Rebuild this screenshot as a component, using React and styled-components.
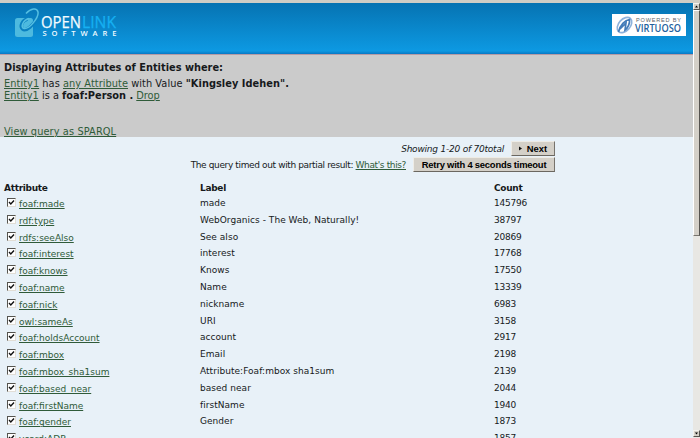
import React from "react";
import styled, { createGlobalStyle } from "styled-components";

const GlobalStyle = createGlobalStyle`
  * { box-sizing: border-box; }
  body {
    margin: 0;
    overflow: hidden;
    color: #16191b;
    font-family: "DejaVu Sans", Verdana, sans-serif;
    font-size: 9px;
  }
`;

const Window = styled.div`
  display: grid;
  grid-template-columns: 1fr 7px;
  width: 700px;
  height: 438px;
  overflow: hidden;
  background: #e8f1f8;
`;

const Page = styled.div`
  display: flex;
  flex-direction: column;
  min-width: 0;
  height: 438px;
  overflow: hidden;
`;

const Header = styled.header`
  display: flex;
  justify-content: space-between;
  flex: none;
  height: 55px;
  padding: 5px 7px 0 14px;
  border-top: 3px solid #d0cdc5;
  border-bottom: 1px solid #b59ba5;
  background: linear-gradient(#0673b2, #0d99e2 94%, #0878c4);
`;

const VirtuosoBadge = styled.div`
  width: 74px;
  height: 22px;
  margin-top: 6px;
  background: #fff;
`;

const QueryPanel = styled.section`
  display: flex;
  flex-direction: column;
  flex: none;
  height: 82px;
  padding: 5px 4px 0;
  background: #cbcbcb;
  font-size: 9.8px;
  line-height: 12px;
`;

const Title = styled.h1`
  margin: 0 0 3px;
  font-size: 9.8px;
  line-height: 15px;
  white-space: nowrap;
`;

const QueryLine = styled.div`
  white-space: nowrap;
  letter-spacing: ${(p) => p.$spacing || 0}px;
`;

const ViewQuery = styled.div`
  margin-top: 24px;
  letter-spacing: 0.1px;
`;

const Link = styled.a`
  color: #2f5b39;
  text-decoration: underline;
  text-underline-offset: 1px;
  text-decoration-thickness: 1px;
`;

const Pager = styled.div`
  display: flex;
  align-items: center;
  justify-content: flex-end;
  flex: none;
  width: 555px;
  height: 15px;
  margin-top: ${(p) => p.$top}px;
  white-space: nowrap;
`;

const Status = styled.span`
  margin-right: ${(p) => p.$gap}px;
  font-style: ${(p) => (p.$italic ? "italic" : "normal")};
  letter-spacing: ${(p) => p.$spacing || 0}px;
`;

const Button = styled.button`
  display: flex;
  align-items: center;
  justify-content: center;
  flex: none;
  width: ${(p) => p.$width}px;
  height: 15px;
  padding: 0;
  border: 1px solid;
  border-color: #eeece6 #77736c #6b6760 #eeece6;
  background: #d4d0c8;
  color: #000;
  font: bold 9.4px "Liberation Sans", Arial, sans-serif;
  letter-spacing: ${(p) => p.$spacing || 0}px;
  white-space: nowrap;
`;

const Arrow = styled.svg`
  width: 4px;
  height: 5px;
  margin-right: 4px;
`;

const Table = styled.div`
  display: grid;
  grid-template-columns: 196px 294px 60px;
  grid-template-rows: 14px;
  grid-auto-rows: 16.8px;
  margin: 10px 0 0 4px;
  white-space: nowrap;
`;

const HeadCell = styled.div`
  font-size: 9px;
  font-weight: bold;
  line-height: 13px;
  letter-spacing: -0.3px;
`;

const AttributeCell = styled.div`
  display: flex;
  gap: 3px;
  padding: 2px 0 0 3px;
  line-height: 12px;
`;

const Cell = styled.div`
  line-height: 14px;
  letter-spacing: ${(p) => p.$spacing || 0}px;
`;

const Box = styled.span`
  flex: none;
  display: flex;
  width: 9px;
  height: 9px;
  border: 1px solid;
  border-color: #55544f #e1ddd5 #e1ddd5 #55544f;
  background: #fff;
`;

const Scrollbar = styled.div`
  display: flex;
  flex-direction: column;
  height: 438px;
  background: #e8e7e3;
  border-top: 3px solid #d0cdc5;
`;

const ScrollButton = styled.div`
  display: flex;
  align-items: center;
  justify-content: center;
  flex: none;
  height: 7px;
  margin-top: ${(p) => p.$top}px;
  border: 1px solid;
  border-color: #f4f2ed #55534f #55534f #f4f2ed;
  background: #d4d0c8;
`;

const Thumb = styled.div`
  flex: none;
  height: 226px;
  border: 1px solid;
  border-color: #fff #55534f #77746e #fff;
  background: #d4d0c8;
`;

const rows = [
  ["foaf:made", "made", "145796"],
  ["rdf:type", "WebOrganics - The Web, Naturally!", "38797"],
  ["rdfs:seeAlso", "See also", "20869"],
  ["foaf:interest", "interest", "17768"],
  ["foaf:knows", "Knows", "17550"],
  ["foaf:name", "Name", "13339"],
  ["foaf:nick", "nickname", "6983"],
  ["owl:sameAs", "URI", "3158"],
  ["foaf:holdsAccount", "account", "2917"],
  ["foaf:mbox", "Email", "2198"],
  ["foaf:mbox_sha1sum", "Attribute:Foaf:mbox sha1sum", "2139"],
  ["foaf:based_near", "based near", "2044"],
  ["foaf:firstName", "firstName", "1940"],
  ["foaf:gender", "Gender", "1873"],
  ["vcard:ADR", "", "1857"],
];

const Check = () => (
  <svg width="7" height="7" viewBox="0 0 7 7">
    <path d="M1 3.1 2.8 5 6 1.5" fill="none" stroke="#111" strokeWidth="1.4" />
  </svg>
);

const OpenLinkLogo = () => (
  <svg width="106" height="36" viewBox="0 0 106 36">
    <rect x="1" y="10" width="18" height="19" rx="2.5" fill="#4dbadf" />
    <path d="M13.5 11C8.5 12 5.5 18 8.5 21C12 24 20 17 23 9" fill="none" stroke="#0b80c0" strokeWidth="3.4" />
    <path d="M12 5.5C17 0 23 -.5 24 4C25 10 15 21.500 10 20.500C6 19.500 9 12 15 10.500" fill="none" stroke="#55bfe2" strokeWidth="1.5" />
    <text x="27" y="19.5" fontFamily="Open Sans, sans-serif" fontSize="16" fill="#f2fbff" stroke="#f2fbff" strokeWidth=".25" textLength="40" lengthAdjust="spacingAndGlyphs">OPEN</text>
    <text x="68" y="19.5" fontFamily="Open Sans, sans-serif" fontSize="16" fill="#16b0f2" stroke="#16b0f2" strokeWidth=".25" textLength="34" lengthAdjust="spacingAndGlyphs">LINK</text>
    <text x="28.5" y="28.4" fontFamily="Open Sans, sans-serif" fontSize="7.6" fontWeight="600" fill="#f2fbff" textLength="74">SOFTWARE</text>
  </svg>
);

const VirtuosoLogo = () => (
  <svg width="74" height="22" viewBox="0 0 74 22">
    <g fill="none">
      <ellipse cx="12.5" cy="11" rx="8.8" ry="5.8" transform="rotate(-48 12.5 11)" stroke="#8db2dc" strokeWidth="1.6" />
      <path d="M6.500 18C8 11 13 6 17.500 5.500C18 9 16 14 13 16L14 9L8 15" stroke="#427bb8" strokeWidth="1.7" />
    </g>
    <text x="24" y="8.3" fontFamily="Liberation Sans, sans-serif" fontSize="5.6" fill="#60656b" textLength="45">POWERED BY</text>
    <text x="23" y="18" fontFamily="Open Sans, sans-serif" fontSize="10.8" fontWeight="600" fill="#225f9d" textLength="46" lengthAdjust="spacingAndGlyphs">VIRTUOSO</text>
  </svg>
);

export default function App() {
  return (
    <Window>
      <GlobalStyle />
      <Page>
        <Header>
          <OpenLinkLogo />
          <VirtuosoBadge><VirtuosoLogo /></VirtuosoBadge>
        </Header>
        <QueryPanel>
          <Title>Displaying Attributes of Entities where:</Title>
          <QueryLine $spacing={0.05}><Link>Entity1</Link> has <Link>any Attribute</Link> with Value <b>"Kingsley Idehen".</b></QueryLine>
          <QueryLine><Link>Entity1</Link> is a <b>foaf:Person .</b> <Link>Drop</Link></QueryLine>
          <ViewQuery><Link>View query as SPARQL</Link></ViewQuery>
        </QueryPanel>
        <Pager $top={4}>
          <Status $italic $gap={7} $spacing={-0.22}>Showing 1-20 of 70total</Status>
          <Button $width={44}>
            <Arrow viewBox="0 0 4 5"><path d="M0 .5 3 2.5 0 4.5Z" fill="#111" /></Arrow>
            Next
          </Button>
        </Pager>
        <Pager $top={1}>
          <Status $gap={7} $spacing={-0.37}>The query timed out with partial result: <Link>What's this?</Link></Status>
          <Button $width={142} $spacing={-0.2}>Retry with 4 seconds timeout</Button>
        </Pager>
        <Table>
          <HeadCell>Attribute</HeadCell>
          <HeadCell>Label</HeadCell>
          <HeadCell>Count</HeadCell>
          {rows.map(([attribute, label, count]) => (
            <React.Fragment key={attribute}>
              <AttributeCell><Box><Check /></Box><Link>{attribute}</Link></AttributeCell>
              <Cell $spacing={0.04}>{label}</Cell>
              <Cell $spacing={-0.25}>{count}</Cell>
            </React.Fragment>
          ))}
        </Table>
      </Page>
      <Scrollbar>
        <ScrollButton $top={0}>
          <svg width="3" height="3"><path d="M0 2.5 1.5 .5 3 2.5Z" fill="#000" /></svg>
        </ScrollButton>
        <Thumb />
        <ScrollButton $top={194}>
          <svg width="3" height="3"><path d="M0 .5 1.5 2.5 3 .5Z" fill="#000" /></svg>
        </ScrollButton>
      </Scrollbar>
    </Window>
  );
}
